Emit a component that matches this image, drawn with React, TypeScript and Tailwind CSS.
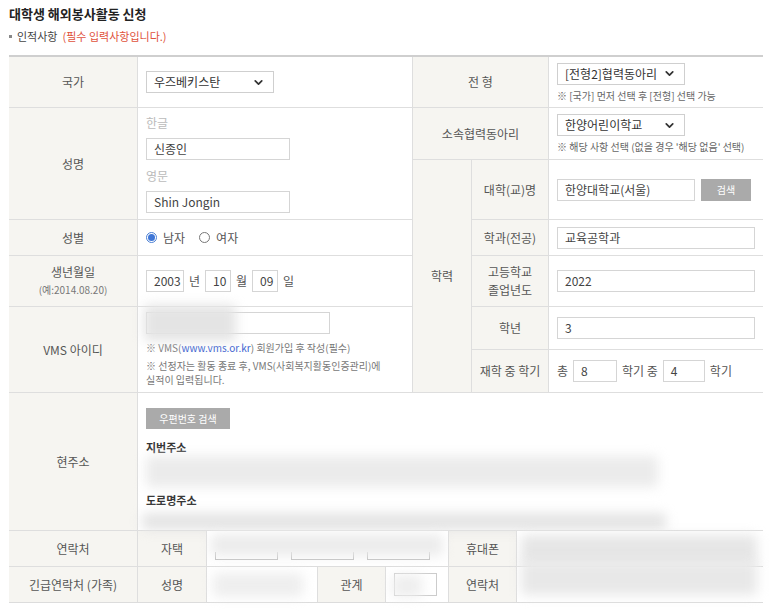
import React from 'react';
import { ChevronDown } from 'lucide-react';

const lab = 'bg-[#f6f5f1] flex items-center justify-center text-center text-[12px] text-[#555] leading-[18px]';
const val = 'bg-white flex items-center px-[8px] text-[12px] text-[#555]';

const Field: React.FC<{ value?: string; className?: string }> = ({ value, className }) => (
  <div className={`h-[22px] shrink-0 flex items-center border border-[#d5d5d5] bg-white px-[7px] text-[12px] text-[#444] whitespace-nowrap ${className ?? ''}`}>
    {value}
  </div>
);

const FakeSelect: React.FC<{ value: string }> = ({ value }) => (
  <div className="flex items-center justify-between h-[22px] w-[128px] border border-[#cfcfcf] bg-white pl-[7px] pr-[8px] text-[12px] text-[#333]">
    <span>{value}</span>
    <ChevronDown size={13} strokeWidth={3.2} className="text-[#333]" />
  </div>
);

const Radio: React.FC<{ checked?: boolean }> = ({ checked }) =>
  checked ? (
    <span className="w-[11px] h-[11px] rounded-full border border-[#4a7fd4] flex items-center justify-center">
      <span className="w-[7px] h-[7px] rounded-full bg-[#3f76d6]" />
    </span>
  ) : (
    <span className="w-[11px] h-[11px] rounded-full border border-[#777] bg-white" />
  );

const Blur: React.FC<{ className: string }> = ({ className }) => (
  <div className={`bg-[#e4e4e4] blur-[6px] rounded ${className}`} />
);

export default function App() {
  return (
    <div className="w-[773px] min-h-[614px] bg-white font-['Noto_Sans_CJK_KR','Noto_Sans',sans-serif] overflow-hidden">
      {/* 제목 */}
      <h1 className="pl-[9px] pt-[5px] text-[13px] font-bold text-[#222] leading-[18px]">대학생 해외봉사활동 신청</h1>
      <p className="pl-[9px] mt-[6px] flex items-center gap-[5px] text-[11px] leading-[14px] text-[#444]">
        <span className="w-[3px] h-[3px] bg-[#888]" />
        인적사항 <span className="text-[#e0523c]">(필수 입력사항입니다.)</span>
      </p>

      <div className="ml-[9px] mt-[12px] w-[754px] border-t-2 border-b border-t-[#cfcfcf] border-b-[#dcdcdc] bg-[#dedede] flex flex-col gap-px">
        {/* 상단 */}
        <div className="grid gap-px grid-cols-[128px_274px_58px_76px_214px] grid-rows-[50px_51px_59px_35px_50px_42px_42px_137px]">
          {/* 국가 */}
          <div className={`${lab} col-start-1 row-start-1`}>국가</div>
          <div className={`${val} col-start-2 row-start-1`}>
            <FakeSelect value="우즈베키스탄" />
          </div>
          {/* 전형 */}
          <div className={`${lab} col-start-3 col-span-2 row-start-1`}>전 형</div>
          <div className="bg-white col-start-5 row-start-1 flex flex-col justify-center px-[8px] gap-[5px]">
            <FakeSelect value="[전형2]협력동아리" />
            <span className="text-[10px] text-[#666] leading-[12px]">※ [국가] 먼저 선택 후 [전형] 선택 가능</span>
          </div>

          {/* 성명 */}
          <div className={`${lab} col-start-1 row-start-2 row-span-2`}>성명</div>
          <div className="bg-white col-start-2 row-start-2 row-span-2 flex flex-col justify-center px-[8px] text-[12px]">
            <span className="text-[#bbb] leading-[16px]">한글</span>
            <Field value="신종인" className="w-[144px] mt-[7px]" />
            <span className="text-[#bbb] leading-[16px] mt-[8px]">영문</span>
            <Field value="Shin Jongin" className="w-[144px] mt-[7px]" />
          </div>

          {/* 소속협력동아리 */}
          <div className={`${lab} col-start-3 col-span-2 row-start-2`}>소속협력동아리</div>
          <div className="bg-white col-start-5 row-start-2 flex flex-col justify-center px-[8px] gap-[5px]">
            <FakeSelect value="한양어린이학교" />
            <span className="text-[10px] text-[#666] leading-[12px]">※ 해당 사항 선택 (없을 경우 '해당 없음' 선택)</span>
          </div>

          {/* 학력 */}
          <div className={`${lab} col-start-3 row-start-3 row-span-5`}>학력</div>
          <div className={`${lab} col-start-4 row-start-3`}>대학(교)명</div>
          <div className={`${val} col-start-5 row-start-3 gap-[6px]`}>
            <Field value="한양대학교(서울)" className="w-[138px]" />
            <button className="h-[22px] w-[50px] bg-[#aaa] text-white text-[10px]">검색</button>
          </div>

          {/* 성별 */}
          <div className={`${lab} col-start-1 row-start-4`}>성별</div>
          <div className={`${val} col-start-2 row-start-4 gap-[6px] text-[#444]`}>
            <Radio checked />
            <span>남자</span>
            <span className="w-[2px]" />
            <Radio />
            <span>여자</span>
          </div>
          <div className={`${lab} col-start-4 row-start-4`}>학과(전공)</div>
          <div className={`${val} col-start-5 row-start-4`}>
            <Field value="교육공학과" className="w-[198px]" />
          </div>

          {/* 생년월일 */}
          <div className={`${lab} col-start-1 row-start-5 flex-col`}>
            <span>생년월일</span>
            <span className="text-[10px] text-[#777]">(예:2014.08.20)</span>
          </div>
          <div className={`${val} col-start-2 row-start-5 gap-[5px] text-[#444]`}>
            <Field value="2003" className="w-[38px] px-[5px]" />
            <span>년</span>
            <Field value="10" className="w-[26px] px-[5px]" />
            <span>월</span>
            <Field value="09" className="w-[26px] px-[5px]" />
            <span>일</span>
          </div>
          <div className={`${lab} col-start-4 row-start-5`}>고등학교<br />졸업년도</div>
          <div className={`${val} col-start-5 row-start-5`}>
            <Field value="2022" className="w-[198px]" />
          </div>

          {/* VMS */}
          <div className={`${lab} col-start-1 row-start-6 row-span-2`}>VMS 아이디</div>
          <div className="bg-white col-start-2 row-start-6 row-span-2 flex flex-col justify-center px-[8px] text-[10px] text-[#777] leading-[14px] relative">
            <Field className="w-[184px]" />
            <Blur className="absolute left-[6px] top-[-2px] w-[92px] h-[36px] bg-[#dcdcdc]" />
            <span className="mt-[7px]">※ VMS(<span className="text-[#3a5fd0]">www.vms.or.kr</span>) 회원가입 후 작성(필수)</span>
            <span className="mt-[4px]">※ 선정자는 활동 종료 후, VMS(사회복지활동인증관리)에</span>
            <span>실적이 입력됩니다.</span>
          </div>
          <div className={`${lab} col-start-4 row-start-6`}>학년</div>
          <div className={`${val} col-start-5 row-start-6`}>
            <Field value="3" className="w-[198px]" />
          </div>
          <div className={`${lab} col-start-4 row-start-7`}>재학 중 학기</div>
          <div className={`${val} col-start-5 row-start-7 gap-[5px] text-[#444]`}>
            <span>총</span>
            <Field value="8" className="w-[44px]" />
            <span>학기 중</span>
            <Field value="4" className="w-[42px]" />
            <span>학기</span>
          </div>

          {/* 현주소 */}
          <div className={`${lab} col-start-1 row-start-8`}>현주소</div>
          <div className="bg-white col-start-2 col-span-4 row-start-8 flex flex-col px-[8px] pt-[15px] text-[11px]">
            <button className="h-[22px] w-[84px] bg-[#aaa] text-white text-[10px]">우편번호 검색</button>
            <span className="mt-[11px] font-bold text-[#333] leading-[14px]">지번주소</span>
            <Blur className="mt-[2px] w-[512px] h-[34px] bg-[#ebebeb]" />
            <span className="mt-[6px] font-bold text-[#333] leading-[14px]">도로명주소</span>
            <Blur className="mt-[6px] -ml-[4px] w-[524px] h-[18px] bg-[#e2e2e2]" />
          </div>
        </div>

        {/* 연락처 */}
        <div className="grid gap-px grid-cols-[128px_68px_110px_67px_62px_67px_246px] grid-rows-[35px_35px]">
          <div className={`${lab} col-start-1 row-start-1`}>연락처</div>
          <div className={`${lab} col-start-2 row-start-1`}>자택</div>
          <div className="bg-white col-start-3 col-span-3 row-start-1 relative flex items-end gap-[13px] pl-[8px] pb-[6px]">
            <span className="w-[63px] h-[8px] border-b border-x border-[#bbb]" />
            <span className="w-[63px] h-[8px] border-b border-x border-[#bbb]" />
            <span className="w-[63px] h-[8px] border-b border-x border-[#bbb]" />
            <Blur className="absolute left-[4px] top-[3px] w-[232px] h-[22px] bg-[#ececec]" />
          </div>
          <div className={`${lab} col-start-6 row-start-1`}>휴대폰</div>
          <div className="bg-white col-start-7 row-start-1 relative">
            <Blur className="absolute left-[4px] top-[4px] w-[236px] h-[32px] bg-[#e6e6e6]" />
          </div>

          <div className={`${lab} col-start-1 row-start-2`}>긴급연락처 (가족)</div>
          <div className={`${lab} col-start-2 row-start-2`}>성명</div>
          <div className="bg-white col-start-3 row-start-2 relative">
            <Blur className="absolute left-[6px] top-[6px] w-[90px] h-[24px] bg-[#eeeeee]" />
          </div>
          <div className={`${lab} col-start-4 row-start-2`}>관계</div>
          <div className="bg-white col-start-5 row-start-2 relative flex items-center pl-[8px]">
            <span className="w-[43px] h-[23px] border border-[#ccc]" />
            <Blur className="absolute left-[6px] top-[8px] w-[30px] h-[22px] bg-[#eeeeee]" />
          </div>
          <div className={`${lab} col-start-6 row-start-2`}>연락처</div>
          <div className="bg-white col-start-7 row-start-2 relative">
            <Blur className="absolute left-[4px] top-[-6px] w-[236px] h-[34px] bg-[#e8e8e8]" />
          </div>
        </div>
      </div>
    </div>
  );
}
